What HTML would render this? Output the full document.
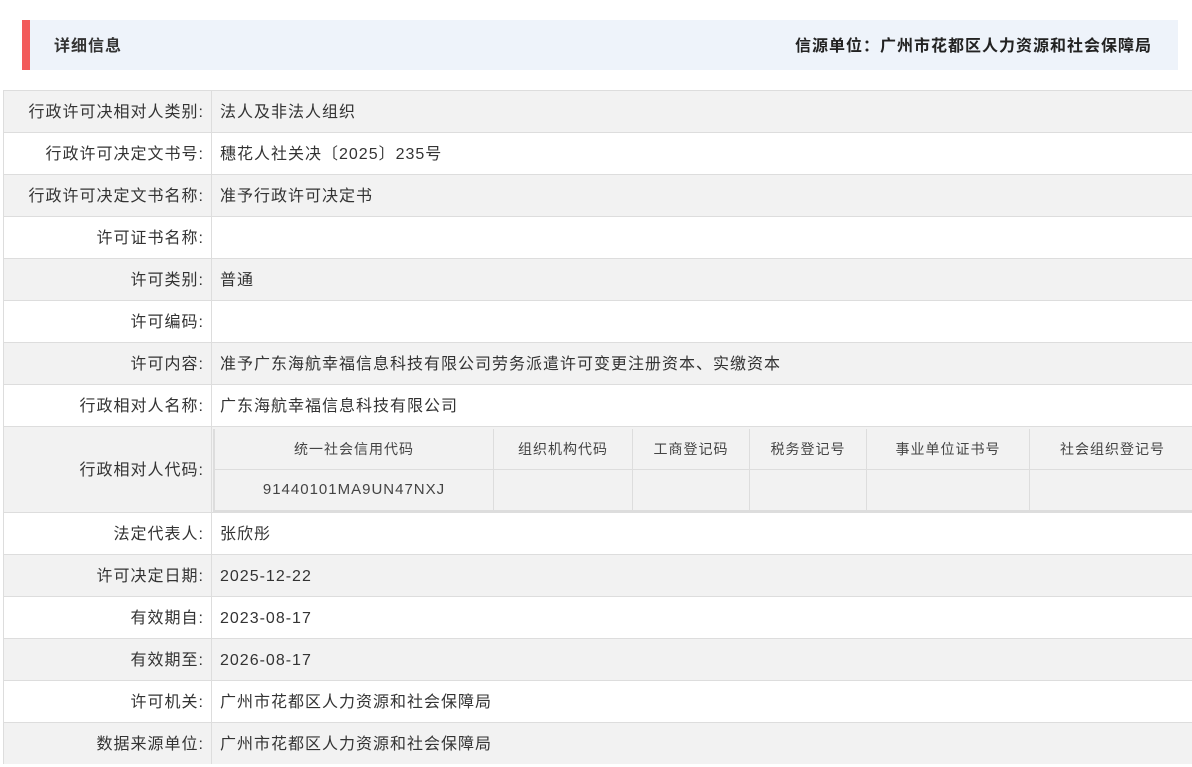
<!DOCTYPE html>
<html><head><meta charset="utf-8"><style>
*{margin:0;padding:0;box-sizing:border-box}
body{width:1192px;height:763px;overflow:hidden;background:#fff;font-family:"Liberation Sans","Noto Sans CJK SC",sans-serif;color:#333;font-size:16px;letter-spacing:1px;position:relative}
.hd{position:absolute;left:22px;top:20px;width:1156px;height:50px;background:#eef3fa;border-left:8px solid #f25b5b}
.hd .l{position:absolute;left:24px;top:0;line-height:54px;font-weight:bold;color:#333}
.hd .r{position:absolute;right:26px;top:0;line-height:54px;font-weight:bold;color:#222}
.row{position:absolute;left:3px;width:1189px;border-top:1px solid #ddd;border-left:1px solid #ddd;line-height:44px}
.row.g{background:#f2f2f2}
.lab{position:absolute;left:0;top:0;width:208px;height:100%;text-align:right;padding-right:7px;border-right:1px solid #ddd}
.val{position:absolute;left:216px;top:0;height:100%;white-space:pre}
.inner{position:absolute;left:209px;top:2px;width:980px;height:83px;border-left:2px solid #ddd;border-bottom:2px solid #ddd}
.c{position:absolute;text-align:center;font-size:14px;border-right:1px solid #ddd;border-bottom:1px solid #ddd;color:#444;line-height:40px}
</style></head><body>
<div class="hd"><span class="l">详细信息</span><span class="r">信源单位：广州市花都区人力资源和社会保障局</span></div>

<div class="row g" style="top:90px;height:42px"><div class="lab">行政许可决相对人类别:</div><div class="val">法人及非法人组织</div></div>
<div class="row" style="top:132px;height:42px"><div class="lab">行政许可决定文书号:</div><div class="val">穗花人社关决〔2025〕235号</div></div>
<div class="row g" style="top:174px;height:42px"><div class="lab">行政许可决定文书名称:</div><div class="val">准予行政许可决定书</div></div>
<div class="row" style="top:216px;height:42px"><div class="lab">许可证书名称:</div><div class="val"></div></div>
<div class="row g" style="top:258px;height:42px"><div class="lab">许可类别:</div><div class="val">普通</div></div>
<div class="row" style="top:300px;height:42px"><div class="lab">许可编码:</div><div class="val"></div></div>
<div class="row g" style="top:342px;height:42px"><div class="lab">许可内容:</div><div class="val">准予广东海航幸福信息科技有限公司劳务派遣许可变更注册资本、实缴资本</div></div>
<div class="row" style="top:384px;height:42px"><div class="lab">行政相对人名称:</div><div class="val">广东海航幸福信息科技有限公司</div></div>
<div class="row g" style="top:426px;height:86px;line-height:88px"><div class="lab">行政相对人代码:</div>
<div class="inner">
<div class="c" style="left:0;top:0;width:279px;height:41px">统一社会信用代码</div>
<div class="c" style="left:279px;top:0;width:139px;height:41px">组织机构代码</div>
<div class="c" style="left:418px;top:0;width:117px;height:41px">工商登记码</div>
<div class="c" style="left:535px;top:0;width:117px;height:41px">税务登记号</div>
<div class="c" style="left:652px;top:0;width:163px;height:41px">事业单位证书号</div>
<div class="c" style="left:815px;top:0;width:165px;height:41px;border-right:none">社会组织登记号</div>
<div class="c" style="left:0;top:41px;width:279px;height:40px;border-bottom:none;font-size:15px">91440101MA9UN47NXJ</div>
<div class="c" style="left:279px;top:41px;width:139px;height:40px;border-bottom:none"></div>
<div class="c" style="left:418px;top:41px;width:117px;height:40px;border-bottom:none"></div>
<div class="c" style="left:535px;top:41px;width:117px;height:40px;border-bottom:none"></div>
<div class="c" style="left:652px;top:41px;width:163px;height:40px;border-bottom:none"></div>
</div></div>
<div class="row" style="top:512px;height:42px"><div class="lab">法定代表人:</div><div class="val">张欣彤</div></div>
<div class="row g" style="top:554px;height:42px"><div class="lab">许可决定日期:</div><div class="val">2025-12-22</div></div>
<div class="row" style="top:596px;height:42px"><div class="lab">有效期自:</div><div class="val">2023-08-17</div></div>
<div class="row g" style="top:638px;height:42px"><div class="lab">有效期至:</div><div class="val">2026-08-17</div></div>
<div class="row" style="top:680px;height:42px"><div class="lab">许可机关:</div><div class="val">广州市花都区人力资源和社会保障局</div></div>
<div class="row g" style="top:722px;height:42px"><div class="lab">数据来源单位:</div><div class="val">广州市花都区人力资源和社会保障局</div></div>
</body></html>
